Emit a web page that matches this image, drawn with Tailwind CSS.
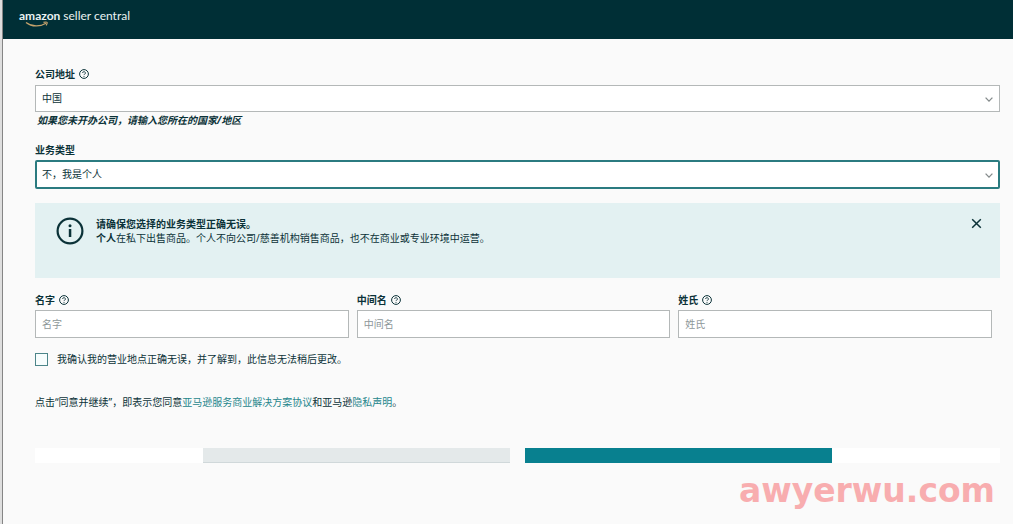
<!DOCTYPE html>
<html lang="zh-CN">
<head>
<meta charset="utf-8">
<meta name="viewport" content="width=device-width, initial-scale=1">
<title>amazon seller central</title>
<script src="https://cdn.jsdelivr.net/npm/@tailwindcss/browser@4"></script>
</head>
<body class="flex min-h-screen bg-[#fafafa] font-['Noto_Sans','Noto_Sans_CJK_SC',sans-serif] text-[10px] leading-[14px] text-[#0b3238]">
<svg class="hidden" aria-hidden="true">
  <symbol id="help" viewBox="0 0 10 10"><circle cx="5" cy="5" r="4.4" fill="none" stroke="currentColor" stroke-width="1"/><path d="M3.6 4a1.4 1.3 0 1 1 2.1 1.1C5.2 5.4 5 5.6 5 6.1M5 7v.9" fill="none" stroke="currentColor" stroke-width=".9"/></symbol>
  <symbol id="chevron" viewBox="0 0 8 5"><path d="M.6.6 4 4.1 7.4.6" fill="none" stroke="currentColor" stroke-width="1.3"/></symbol>
</svg>
<div class="w-[3px] shrink-0 border-r border-[#858585] bg-[#dedede]"></div>
<div class="flex min-w-0 flex-1 flex-col">
  <header class="h-[39px] bg-[#002f36] px-4 pt-2">
    <a href="#" class="relative inline-flex items-baseline gap-[3px] font-[Lato,sans-serif] text-[12px] leading-4 text-[#eaf2f2]">
      <span class="font-bold">amazon</span><span>seller central</span>
      <svg class="absolute left-[6px] top-[13px] h-[6px] w-[24px]" viewBox="0 0 24 6" fill="none" stroke="#c5a36c" stroke-width="1.2" aria-hidden="true"><path d="M1 1.4C7 6 15 6 21 2.3M18.5 1.4c2-.5 3.4-.4 3.6 0s-.2 1.8-1 2.9"/></svg>
    </a>
  </header>
  <main class="flex flex-1 flex-col pl-8 pr-[13px] pt-7">
    <form class="flex flex-col">
      <div class="flex items-center gap-1 font-bold"><label for="addr">公司地址</label><svg class="size-[10px]" aria-hidden="true"><use href="#help"/></svg></div>
      <div class="relative mt-1">
        <select id="addr" class="h-[27px] w-full appearance-none border border-[#b4b8b8] bg-white pl-[6px] pr-6 pb-[2px] outline-none"><option>中国</option></select>
        <svg class="pointer-events-none absolute right-[7px] top-[12px] h-[5px] w-2 text-[#858b8c]" aria-hidden="true"><use href="#chevron"/></svg>
      </div>
      <p class="pl-[2px] pt-px font-bold italic">如果您未开办公司，请输入您所在的国家/地区</p>
      <label for="type" class="mt-4 font-bold">业务类型</label>
      <div class="relative mt-[3px]">
        <select id="type" class="h-[29px] w-full appearance-none rounded-[2px] border-2 border-[#2b7b80] bg-white pl-[5px] pr-6 pb-px outline-none"><option>不，我是个人</option></select>
        <svg class="pointer-events-none absolute right-[7px] top-[13px] h-[5px] w-2 text-[#858b8c]" aria-hidden="true"><use href="#chevron"/></svg>
      </div>
      <section class="mt-[14px] flex h-[75px] items-start bg-[#e3f1f2] pl-[21px] pr-[18px] pt-[14px]">
        <svg class="size-7 shrink-0" viewBox="0 0 28 28" aria-hidden="true"><circle cx="14" cy="14" r="12.4" fill="none" stroke="#0b3238" stroke-width="2.2"/><circle cx="14" cy="8.7" r="1.5" fill="#0b3238"/><path d="M12.8 12h2.5v8h-2.5z" fill="#0b3238"/></svg>
        <div class="ml-3 flex-1">
          <h2 class="font-bold">请确保您选择的业务类型正确无误。</h2>
          <p><b>个人</b>在私下出售商品。个人不向公司/慈善机构销售商品，也不在商业或专业环境中运营。</p>
        </div>
        <button type="button" aria-label="关闭" class="mt-px"><svg class="size-[11px]" viewBox="0 0 11 11" fill="none" stroke="#0b3238" stroke-width="1.5" aria-hidden="true"><path d="m1.2 1.2 8.6 8.6m0-8.6L1.2 9.8"/></svg></button>
      </section>
      <div class="mt-[15px] grid grid-cols-3 gap-2 pr-2">
        <div><div class="flex items-center gap-1 font-bold"><label for="first">名字</label><svg class="size-[10px]" aria-hidden="true"><use href="#help"/></svg></div>
          <input id="first" type="text" placeholder="名字" class="mt-[3px] block h-7 w-full border border-[#b4b8b8] bg-white px-[6px] placeholder:text-[#8d9799]"></div>
        <div><div class="flex items-center gap-1 font-bold"><label for="middle">中间名</label><svg class="size-[10px]" aria-hidden="true"><use href="#help"/></svg></div>
          <input id="middle" type="text" placeholder="中间名" class="mt-[3px] block h-7 w-full border border-[#b4b8b8] bg-white px-[6px] placeholder:text-[#8d9799]"></div>
        <div><div class="flex items-center gap-1 font-bold"><label for="last">姓氏</label><svg class="size-[10px]" aria-hidden="true"><use href="#help"/></svg></div>
          <input id="last" type="text" placeholder="姓氏" class="mt-[3px] block h-7 w-full border border-[#b4b8b8] bg-white px-[6px] placeholder:text-[#8d9799]"></div>
      </div>
      <div class="mt-[14px] flex items-center gap-[9px]">
        <input id="confirm" type="checkbox" class="size-[13px] appearance-none border border-[#4c8589] bg-[#f7fdfd]">
        <label for="confirm">我确认我的营业地点正确无误，并了解到，此信息无法稍后更改。</label>
      </div>
      <p class="mt-[29px]">点击“同意并继续”，即表示您同意<a href="#" class="text-[#26868c]">亚马逊服务商业解决方案协议</a>和亚马逊<a href="#" class="text-[#26868c]">隐私声明</a>。</p>
      <div class="mt-[39px] flex h-[15px] justify-center bg-white">
        <button type="button" aria-label="返回" class="w-[307px] border-b border-[#d0d8da] bg-[#e4e9ea]"></button>
        <span class="w-[15px] bg-[#fafafa]"></span>
        <button type="submit" aria-label="同意并继续" class="w-[307px] bg-[#08808f]"></button>
      </div>
    </form>
    <p class="mt-2 mr-[5px] self-end font-['DejaVu_Sans',sans-serif] text-[33px] leading-[40px] font-bold text-[#f8adaf]">awyerwu.com</p>
  </main>
</div>
</body>
</html>
